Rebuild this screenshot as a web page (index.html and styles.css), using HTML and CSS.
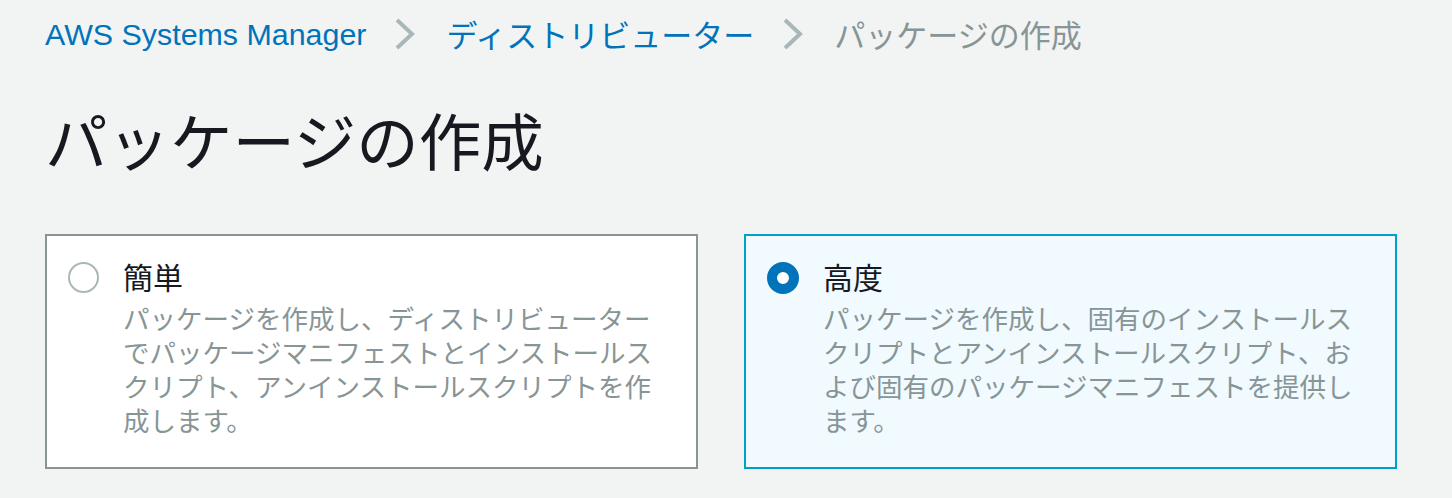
FILE: index.html
```html
<!DOCTYPE html>
<html lang="ja">
<head>
<meta charset="utf-8">
<title>パッケージの作成</title>
<link rel="stylesheet" href="styles.css">
</head>
<body>
<div class="page">
  <nav class="breadcrumb">
    <a class="crumb-link" href="#">AWS Systems Manager</a>
    <svg class="chevron" width="20" height="32" viewBox="0 0 20 32" aria-hidden="true"><path d="M2 2 L17 16 L2 30" fill="none" stroke="#aab7b8" stroke-width="4"/></svg>
    <a class="crumb-link crumb-jp" href="#">ディストリビューター</a>
    <svg class="chevron" width="20" height="32" viewBox="0 0 20 32" aria-hidden="true"><path d="M2 2 L17 16 L2 30" fill="none" stroke="#aab7b8" stroke-width="4"/></svg>
    <span class="crumb-current crumb-jp">パッケージの作成</span>
  </nav>
  <h1 class="title">パッケージの作成</h1>
  <div class="tiles">
    <label class="tile">
      <span class="radio"></span>
      <span class="tile-body">
        <span class="tile-label">簡単</span>
        <span class="tile-desc">パッケージを作成し、ディストリビューターでパッケージマニフェストとインストールスクリプト、アンインストールスクリプトを作成します。</span>
      </span>
    </label>
    <label class="tile tile-selected">
      <span class="radio radio-checked"></span>
      <span class="tile-body">
        <span class="tile-label">高度</span>
        <span class="tile-desc">パッケージを作成し、固有のインストールスクリプトとアンインストールスクリプト、および固有のパッケージマニフェストを提供します。</span>
      </span>
    </label>
  </div>
</div>
</body>
</html>
```
FILE: styles.css
```css
html, body {
  margin: 0;
  padding: 0;
  background: #f2f3f3;
}
body {
  font-family: "Liberation Sans", "Noto Sans CJK JP", sans-serif;
  color: #16191f;
}
.page {
  width: 1352px;
  padding: 14px 0 0 45px;
}
.breadcrumb {
  display: flex;
  align-items: center;
  height: 40px;
  font-size: 30.4px;
  line-height: 40px;
}
.crumb-jp {
  font-family: "Noto Sans CJK JP", sans-serif;
  font-size: 31px;
}
.crumb-link {
  color: #0073bb;
  text-decoration: none;
}
.crumb-current {
  color: #879596;
}
.chevron {
  margin: 0 31px 0 29px;
  flex: none;
}
.title {
  margin: 45px 0 0 0;
  font-size: 62.5px;
  line-height: 80px;
  font-weight: 400;
  color: #16191f;
  font-family: "Noto Sans CJK JP", sans-serif;
}
.tiles {
  margin-top: 55px;
  display: grid;
  grid-template-columns: 1fr 1fr;
  gap: 46px;
}
.tile {
  display: flex;
  align-items: flex-start;
  gap: 24px;
  background: #ffffff;
  border: 2px solid #879596;
  padding: 20px 20px 30px 21px;
}
.tile-selected {
  background: #f1faff;
  border-color: #00a1c9;
}
.radio {
  flex: none;
  box-sizing: border-box;
  width: 31px;
  height: 31px;
  margin-top: 6px;
  border-radius: 50%;
  border: 2px solid #aab7b8;
  background: #ffffff;
}
.radio-checked {
  width: 32px;
  height: 32px;
  border: 10px solid #0073bb;
}
.tile-body {
  display: flex;
  flex-direction: column;
}
.tile-label {
  font-family: "Noto Sans CJK JP", sans-serif;
  font-size: 30px;
  line-height: 40px;
  color: #16191f;
}
.tile-desc {
  margin-top: 5px;
  width: 20.2em;
  font-family: "Noto Sans CJK JP", sans-serif;
  font-size: 26.5px;
  line-height: 34px;
  color: #879596;
}
```
